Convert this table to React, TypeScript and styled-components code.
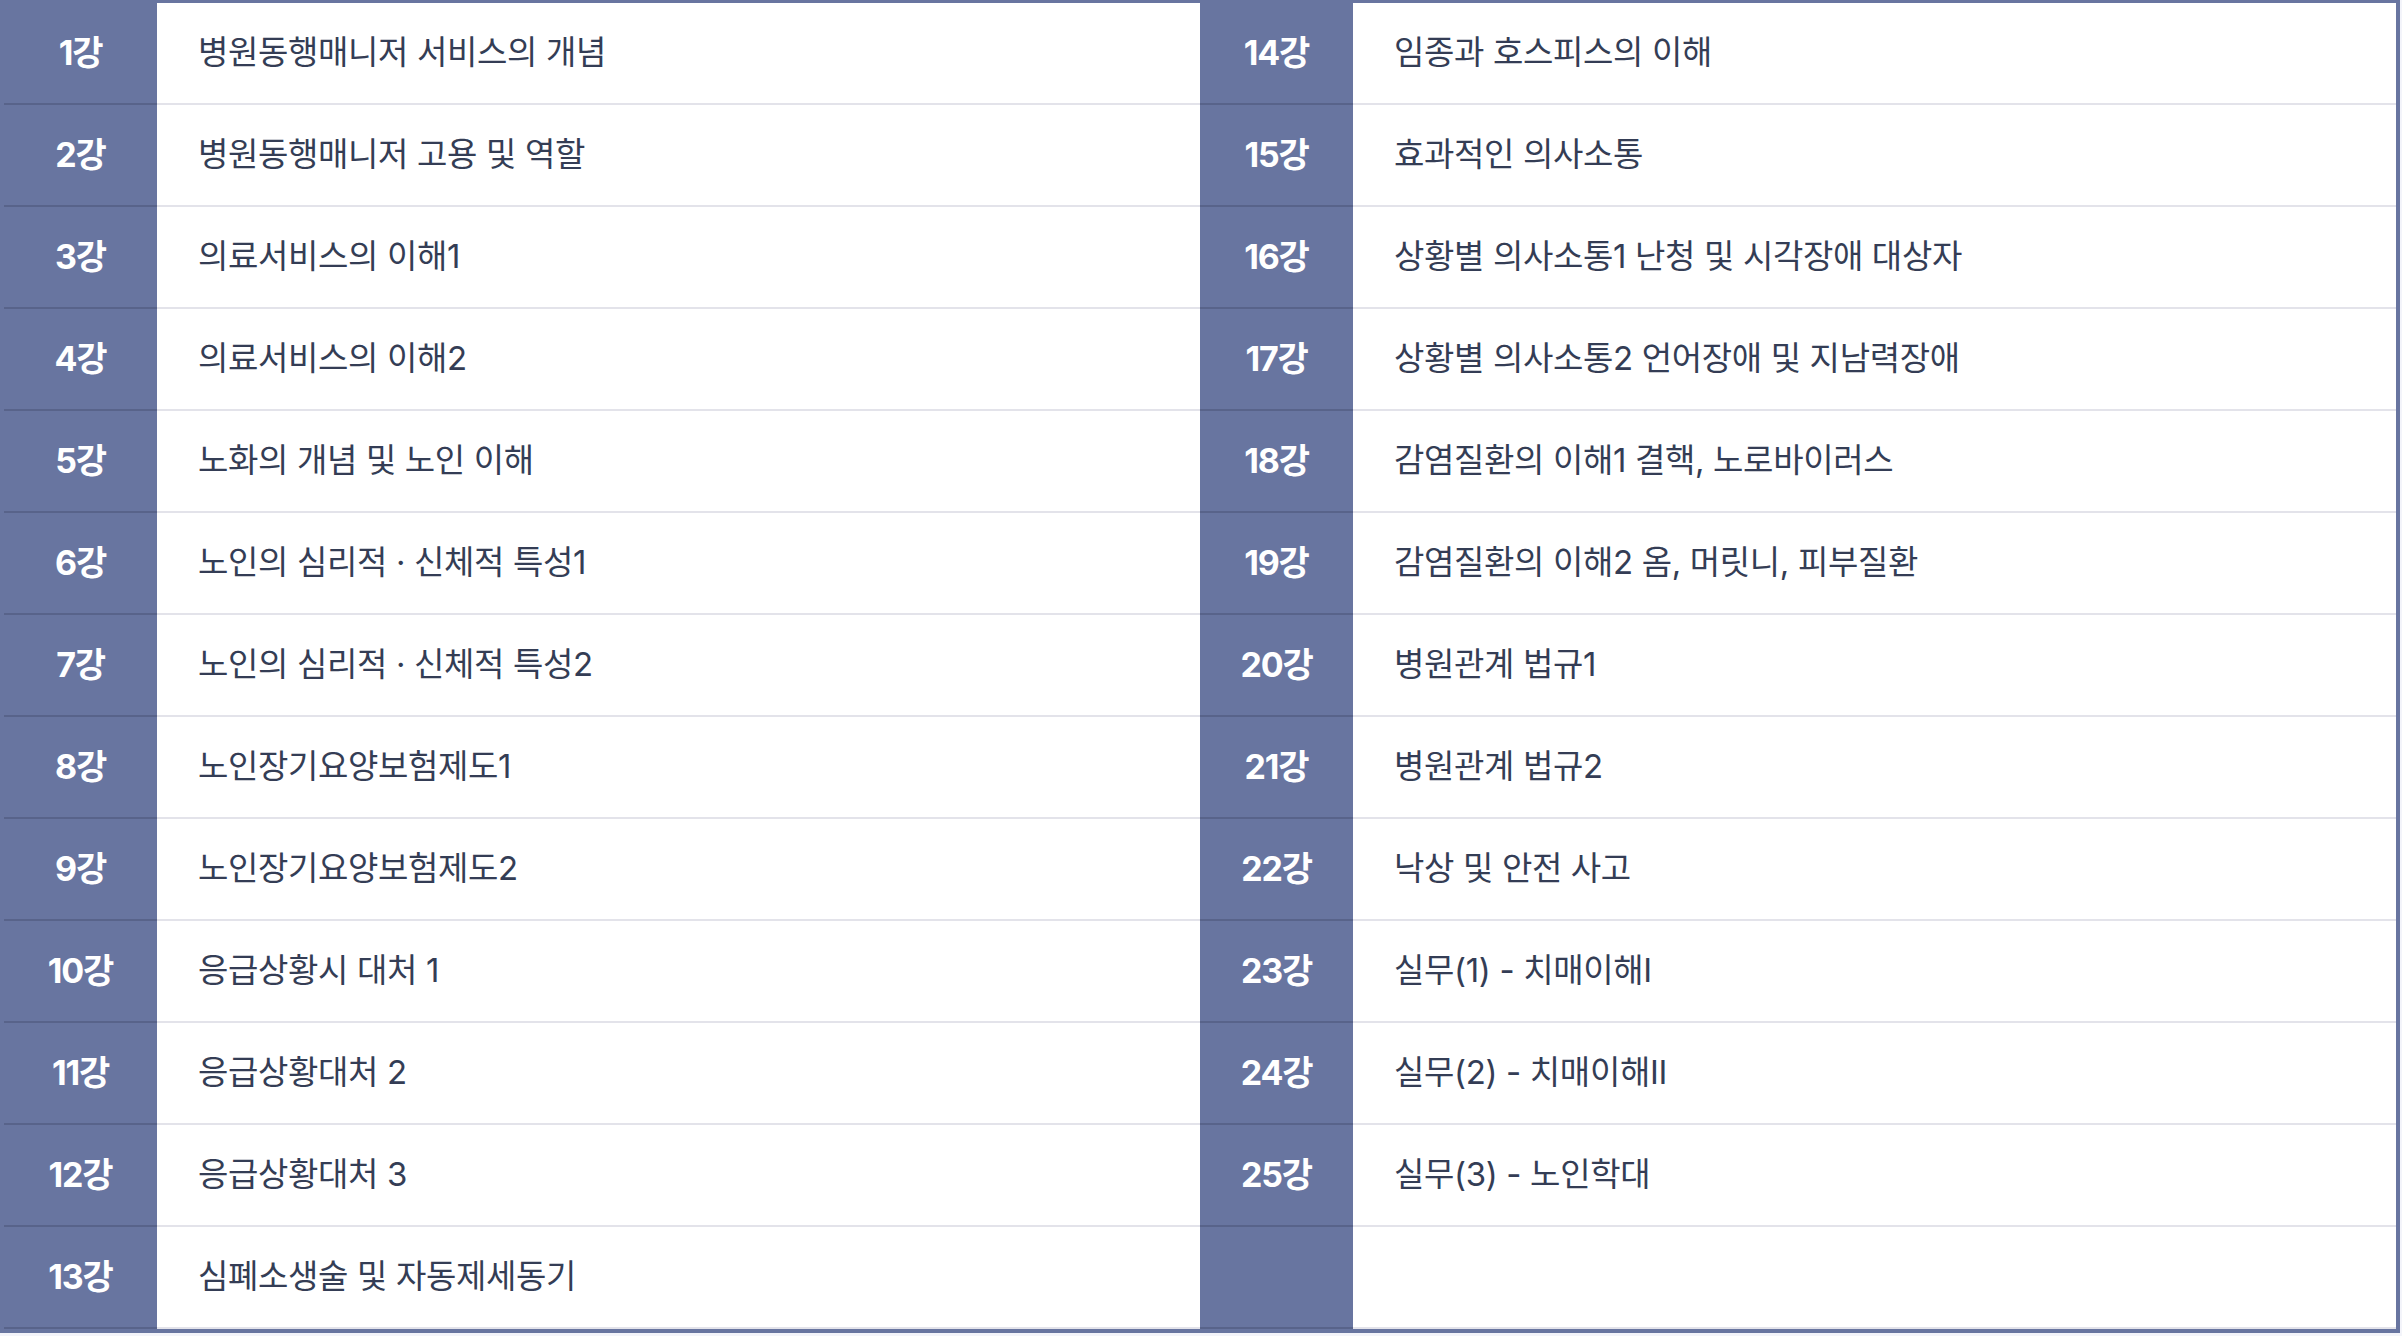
import React from 'react';
import styled, { createGlobalStyle } from 'styled-components';

const lessons = [
  '병원동행매니저 서비스의 개념',
  '병원동행매니저 고용 및 역할',
  '의료서비스의 이해1',
  '의료서비스의 이해2',
  '노화의 개념 및 노인 이해',
  '노인의 심리적 · 신체적 특성1',
  '노인의 심리적 · 신체적 특성2',
  '노인장기요양보험제도1',
  '노인장기요양보험제도2',
  '응급상황시 대처 1',
  '응급상황대처 2',
  '응급상황대처 3',
  '심폐소생술 및 자동제세동기',
  '임종과 호스피스의 이해',
  '효과적인 의사소통',
  '상황별 의사소통1 난청 및 시각장애 대상자',
  '상황별 의사소통2 언어장애 및 지남력장애',
  '감염질환의 이해1 결핵, 노로바이러스',
  '감염질환의 이해2 옴, 머릿니, 피부질환',
  '병원관계 법규1',
  '병원관계 법규2',
  '낙상 및 안전 사고',
  '실무(1) - 치매이해I',
  '실무(2) - 치매이해II',
  '실무(3) - 노인학대',
];

const ROWS = 13;

const GlobalStyle = createGlobalStyle`
  html, body {
    margin: 0;
    padding: 0;
    background: #f3f4fa;
  }
  body {
    font-family: Inter, 'Noto Sans CJK KR', sans-serif;
  }
`;

const Table = styled.div`
  box-sizing: border-box;
  width: 2400px;
  display: grid;
  grid-template-columns: 153px 1fr 153px 1fr;
  grid-auto-rows: 102px;
  background: #ffffff;
  border: 4px solid #6875a0;
  border-top-width: 3px;
`;

const NumCell = styled.div`
  box-sizing: border-box;
  display: flex;
  align-items: center;
  justify-content: center;
  padding-bottom: 6px;
  background: #6875a0;
  border-bottom: 2px solid #58638a;
  color: #ffffff;
  font-size: 34px;
  font-weight: 700;
  letter-spacing: -1.2px;
`;

const TitleCell = styled.div`
  box-sizing: border-box;
  display: flex;
  align-items: center;
  padding: 0 0 7px 41px;
  border-bottom: 2px solid #e3e3ea;
  color: #343d55;
  font-size: 33px;
  font-weight: 400;
  letter-spacing: -0.35px;
  white-space: nowrap;
`;

const App = () => {
  const rows = Array.from({ length: ROWS }, (_, i) => {
    const left = i;
    const right = i + ROWS;
    return (
      <React.Fragment key={i}>
        <NumCell>{left + 1}강</NumCell>
        <TitleCell>{lessons[left]}</TitleCell>
        <NumCell>{right < lessons.length ? `${right + 1}강` : ''}</NumCell>
        <TitleCell>{lessons[right] ?? ''}</TitleCell>
      </React.Fragment>
    );
  });

  return (
    <>
      <GlobalStyle />
      <Table>{rows}</Table>
    </>
  );
};

export default App;
